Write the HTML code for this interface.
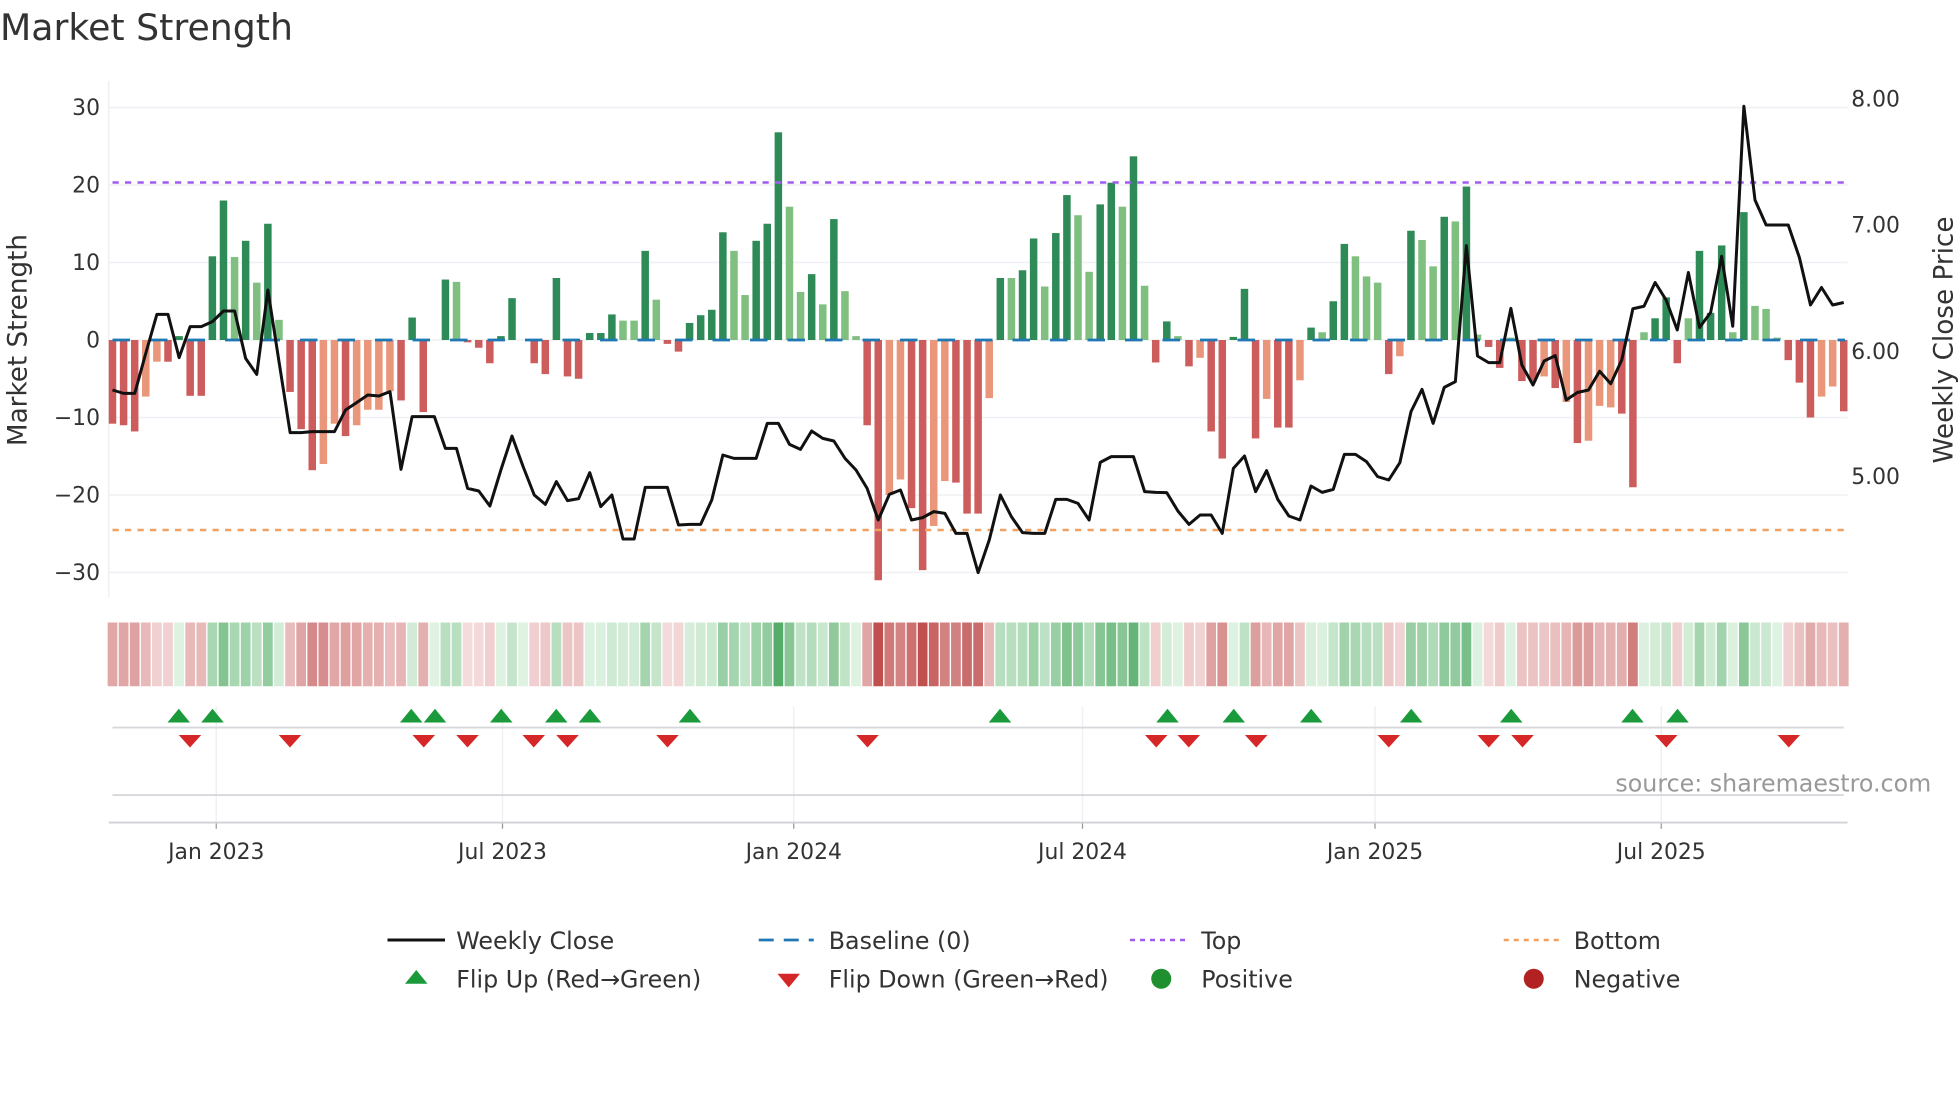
<!DOCTYPE html>
<html><head><meta charset="utf-8"><style>
html,body{margin:0;padding:0;background:#fff;}
svg{display:block;font-family:"DejaVu Sans","Liberation Sans",sans-serif;}
</style></head><body>
<svg id="c" width="1960" height="1102" viewBox="0 0 1568 881.6" xmlns="http://www.w3.org/2000/svg">
<rect width="1568" height="881.6" fill="#fff"/>
<text x="0" y="32" font-size="29" fill="#333">Market Strength</text>
<g id="grid" stroke="#eef0f3" stroke-width="1.2"></g>
<line x1="87" y1="65" x2="87" y2="478" stroke="#eef0f3" stroke-width="1.2"/>
<g id="bars"></g>
<line x1="90" y1="272" x2="1476" y2="272" stroke="#1f77b4" stroke-width="2.2" stroke-dasharray="14 16"/>
<line x1="90" y1="146" x2="1476" y2="146" stroke="#a05cf0" stroke-width="2" stroke-dasharray="5 5"/>
<line x1="90" y1="424" x2="1476" y2="424" stroke="#f0a060" stroke-width="2" stroke-dasharray="5 5"/>
<polyline id="price" fill="none" stroke="#111" stroke-width="2.4" stroke-linejoin="round"/>
<g id="ticks" font-size="17.5" fill="#333"></g>
<text transform="translate(21,272) rotate(-90)" text-anchor="middle" font-size="21" fill="#333">Market Strength</text>
<text transform="translate(1562,272) rotate(-90)" text-anchor="middle" font-size="21" fill="#333">Weekly Close Price</text>
<g id="heat"></g>
<g id="lower" stroke="#eef0f3" stroke-width="1.2"></g>
<line x1="90" y1="582" x2="1475" y2="582" stroke="#d6d8dc" stroke-width="1.5"/>
<line x1="90" y1="636" x2="1475" y2="636" stroke="#d6d8dc" stroke-width="1.5"/>
<line x1="87" y1="658" x2="1478" y2="658" stroke="#d0d2d6" stroke-width="1.5"/>
<g id="marks"></g>
<text x="1545" y="633" text-anchor="end" font-size="19" fill="#999">source: sharemaestro.com</text>
<g font-size="19" fill="#333">
<line x1="310" y1="752" x2="356" y2="752" stroke="#111" stroke-width="2.4"/>
<text x="365" y="759">Weekly Close</text>
<line x1="607" y1="752" x2="651" y2="752" stroke="#1f77b4" stroke-width="2.2" stroke-dasharray="12 8"/>
<text x="663" y="759">Baseline (0)</text>
<line x1="904" y1="752" x2="948" y2="752" stroke="#a05cf0" stroke-width="2" stroke-dasharray="4 4"/>
<text x="961" y="759">Top</text>
<line x1="1203" y1="752" x2="1247" y2="752" stroke="#f0a060" stroke-width="2" stroke-dasharray="4 4"/>
<text x="1259" y="759">Bottom</text>
<polygon points="324,787 333,776 342,787" fill="#1a9a3a"/>
<text x="365" y="790">Flip Up (Red→Green)</text>
<polygon points="622,779 640,779 631,790" fill="#d62728"/>
<text x="663" y="790">Flip Down (Green→Red)</text>
<circle cx="929" cy="783" r="8" fill="#1f8f2f"/>
<text x="961" y="790">Positive</text>
<circle cx="1227" cy="783" r="8" fill="#b22222"/>
<text x="1259" y="790">Negative</text>
</g>
</svg>
<script>
var NS="http://www.w3.org/2000/svg";
function el(p,t,a,txt){var e=document.createElementNS(NS,t);for(var k in a)e.setAttribute(k,a[k]);if(txt!==undefined)e.textContent=txt;document.getElementById(p).appendChild(e);return e;}
var V="r-10.8 r-11 r-11.8 s-7.3 s-2.8 r-2.8 d.5 r-7.2 r-7.2 d10.8 d18 l10.7 d12.8 l7.4 d15 l2.6 r-6.7 r-11.5 r-16.8 s-16 s-10.8 r-12.4 s-11 s-9 s-9 s-6.6 r-7.8 d2.9 r-9.3 d0 d7.8 l7.5 r-.3 r-1 r-3 d.5 d5.4 d0 r-3 r-4.4 d8 r-4.7 r-5 d.9 d.9 d3.3 l2.5 l2.5 d11.5 l5.2 r-.5 r-1.5 d2.2 d3.2 d3.9 d13.9 l11.5 l5.8 d12.8 d15 d26.8 l17.2 l6.2 d8.5 l4.6 d15.6 l6.3 l.5 r-11 r-31 s-20 s-18 r-21.7 r-29.7 s-24 s-18.2 r-18.4 r-22.4 r-22.4 s-7.5 d8 l8 d9 d13.1 l6.9 d13.8 d18.7 l16.1 l8.8 d17.5 d20.3 l17.2 d23.7 l7 r-2.9 d2.4 l.5 r-3.4 s-2.3 r-11.8 r-15.3 d.4 d6.6 r-12.7 s-7.6 r-11.3 r-11.3 s-5.2 d1.6 l1 d5 d12.4 l10.8 l8.2 l7.4 r-4.4 s-2.1 d14.1 l12.9 l9.5 d15.9 l15.3 d19.8 l.7 r-.9 r-3.6 l.3 r-5.3 r-5.3 s-4.7 r-6.2 s-8 r-13.3 s-13 s-8.5 s-8.7 r-9.5 r-19 l1 d2.8 d5.5 r-3 l2.8 d11.5 d3.5 d12.2 l1 d16.5 l4.4 l4 l.3 r-2.6 r-5.5 r-10 s-7.3 s-6 r-9.2".split(" ");
var ZY=[930,940,940,820,703,703,833,740,740,725,693,693,835,883,630,845,1058,1058,1055,1055,1055,990,968,945,948,935,1168,1010,1010,1010,1105,1105,1225,1233,1278,1170,1068,1160,1245,1273,1205,1262,1256,
1178,1280,1245,1377,1377,1222,1222,1222,1335,1333,1333,1260,1125,1135,1135,1135,1030,1030,1093,1108,1053,1075,1083,1135,1170,1225,1320,1243,1230,1320,1313,1295,1300,1360,1360,1478,1380,1245,1310,1358,1360,1360,1258,1258,1270,
1320,1147,1130,1130,1130,1235,1237,1238,1293,1333,1305,1305,1360,1165,1128,1235,1172,1258,1308,1320,1218,1237,1228,1123,1123,1145,1190,1200,1148,995,928,1030,922,905,497,828,848,848,685,855,915,843,827];
var PY=ZY.map(function(z){return 64+z*0.26667;}).concat([320,314,312,297,307,288,247,245,226,240,264,218,262,250,205,261,85,160,180,180,180,206,244,230,244,242]);
var col={d:"#2e8b57",l:"#7fbf7f",r:"#cd5c5c",s:"#e9967a"};
var N=V.length, sp=(1475-90)/(N-1);
function X(i){return 90+i*sp;}
[30,20,10,0,-10,-20,-30].forEach(function(v){var y=272-v*6.2;el("grid","line",{x1:87,x2:1478,y1:y,y2:y});el("ticks","text",{x:80,y:y+6,"text-anchor":"end"},(v<0?"\u2212":"")+Math.abs(v));});
[["8.00",79],["7.00",180],["6.00",281],["5.00",381]].forEach(function(a){el("ticks","text",{x:1481,y:a[1]+6},a[0]);});
function mix(a,b,t){return "rgb("+[0,1,2].map(function(k){return Math.round(a[k]+(b[k]-a[k])*t);}).join(",")+")";}
var pts=[];
for(var i=0;i<N;i++){
  var c=V[i][0], v=parseFloat(V[i].slice(1)), x=X(i);
  if(Math.abs(v)>0.05){var y0=272, y1=272-v*6.2;el("bars","rect",{x:x-3,y:Math.min(y0,y1),width:6,height:Math.abs(y1-y0),fill:col[c]});}
  var t=Math.min(1,Math.abs(v)/28);
  var f = (c=="d"||c=="l") ? mix([224,243,227],[80,170,100],t) : mix([245,222,222],[192,80,80],t);
  el("heat","rect",{x:x-3.9,y:498,width:7.8,height:51,fill:f});
  if(i<PY.length)pts.push(x.toFixed(1)+","+PY[i].toFixed(1));
}
document.getElementById("price").setAttribute("points",pts.join(" "));
[["Jan 2023",173],["Jul 2023",402],["Jan 2024",635],["Jul 2024",866],["Jan 2025",1100],["Jul 2025",1329]].forEach(function(a){
  el("lower","line",{x1:a[1],x2:a[1],y1:565,y2:658});
  el("ticks","line",{x1:a[1],x2:a[1],y1:658,y2:663,stroke:"#999","stroke-width":1});
  el("ticks","text",{x:a[1],y:687,"text-anchor":"middle"},a[0]);
});
[143,170,329,348,401,445,472,552,800,934,987,1049,1129,1209,1306,1342].forEach(function(x){el("marks","polygon",{points:(x-9)+",578 "+x+",567 "+(x+9)+",578",fill:"#1a9a3a"});});
[152,232,339,374,427,454,534,694,925,951,1005,1111,1191,1218,1333,1431].forEach(function(x){el("marks","polygon",{points:(x-9)+",588 "+(x+9)+",588 "+x+",598",fill:"#d62728"});});
</script>
</body></html>
